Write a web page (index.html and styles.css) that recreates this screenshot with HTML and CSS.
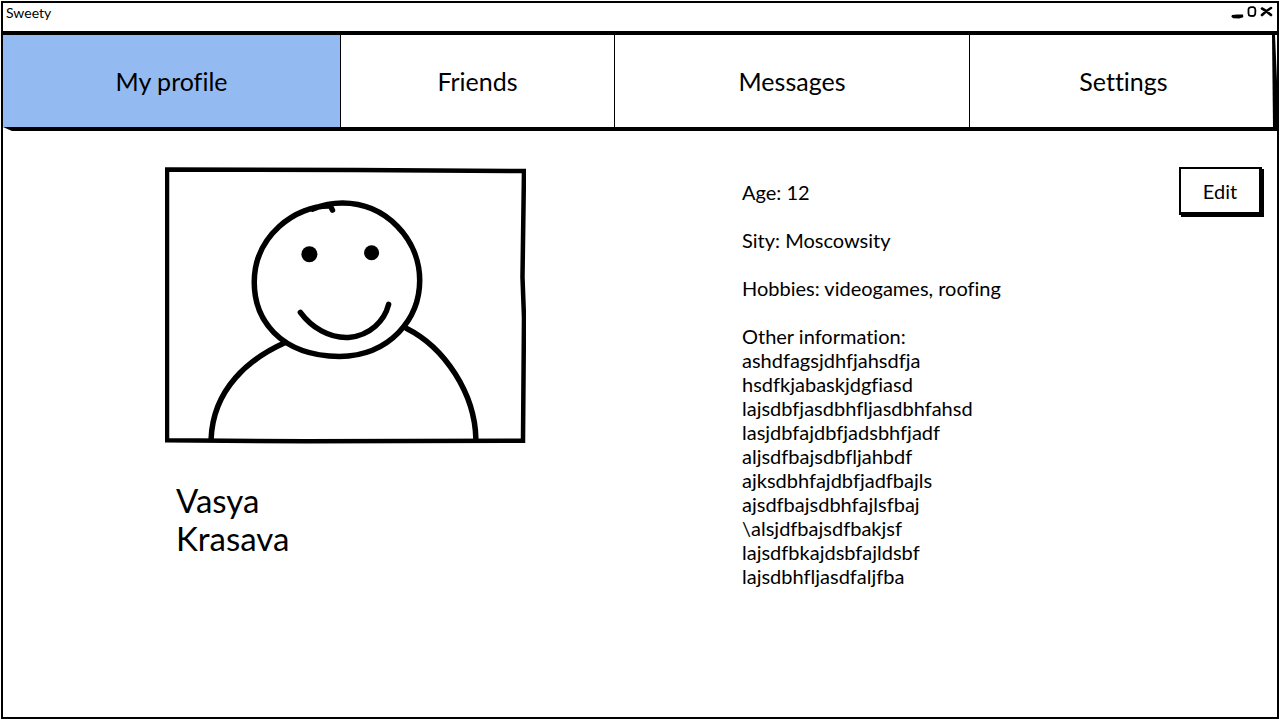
FILE: index.html
```html
<!DOCTYPE html>
<html lang="en">
<head>
<meta charset="utf-8">
<meta name="viewport" content="width=device-width, initial-scale=1">
<title>Sweety</title>
<link rel="stylesheet" href="styles.css">
</head>
<body>
<div class="window">
  <header class="titlebar">
    <span class="title">Sweety</span>
    <div class="controls">
      <button class="control" aria-label="Minimize"><svg width="13" height="14" viewBox="0 0 13 14"><path d="M1 10L6 9.500L12 9.500L12.300 12.300L8 13.500L2 13.200L.3 11.500Z"/></svg></button>
      <button class="control" aria-label="Maximize"><svg width="10" height="14" viewBox="0 0 10 14"><path d="M1.500 4Q1.800 2.500 4 2.200L6.500 2.200Q8.300 2.700 8.400 5L8.200 9Q7.800 10.800 6 11L3.200 10.900Q1.500 10.500 1.500 8.500Z" fill="none" stroke="#000" stroke-width="1.800"/></svg></button>
      <button class="control" aria-label="Close"><svg width="13" height="14" viewBox="0 0 13 14"><path d="M2 3.500Q6 5.500 11 10M11 3Q6 6 2 10" fill="none" stroke="#000" stroke-width="2.600" stroke-linecap="round"/></svg></button>
    </div>
  </header>
  <nav class="tabs">
    <a class="tab tab-active" href="#profile" aria-current="page">My profile</a>
    <a class="tab" href="#friends">Friends</a>
    <a class="tab" href="#messages">Messages</a>
    <a class="tab" href="#settings">Settings</a>
  </nav>
  <main class="profile">
    <section class="person">
      <svg class="photo" viewBox="0 0 360 276" role="img" aria-label="Profile picture">
        <g fill="none" stroke="#000" stroke-linecap="round">
          <path d="M2 2.500L190 3L358 4L356.500 110L358 150L357 273L140 273.500L2 272.500Z" stroke-width="4.500" stroke-linecap="butt"/>
          <path d="M167 43L165 39C130 38 89 69 89 115C89 151 113 188 174 189C225 188 254 151 254 113C254 72 220 36 177 36C168 36 157 38 147 42" stroke-width="5.500"/>
          <path d="M135 145C146 160 164 171 183 170C205 168 219 153 223 137" stroke-width="5.500"/>
          <path d="M120 175C84 191 48 221 46 271M241 161C279 180 309 226 310 271" stroke-width="5.500"/>
        </g>
        <circle cx="144" cy="87" r="8"/><circle cx="206" cy="85.500" r="7.500"/>
      </svg>
      <h1 class="name">Vasya<br>Krasava</h1>
    </section>
    <section class="details">
      <p>Age: 12</p>
      <p>Sity: Moscowsity</p>
      <p>Hobbies: videogames, roofing</p>
      <p>Other information:<br>ashdfagsjdhfjahsdfja<br>hsdfkjabaskjdgfiasd<br>lajsdbfjasdbhfljasdbhfahsd<br>lasjdbfajdbfjadsbhfjadf<br>aljsdfbajsdbfljahbdf<br>ajksdbhfajdbfjadfbajls<br>ajsdfbajsdbhfajlsfbaj<br>\alsjdfbajsdfbakjsf<br>lajsdfbkajdsbfajldsbf<br>lajsdbhfljasdfaljfba</p>
    </section>
    <button class="edit">Edit</button>
  </main>
</div>
</body>
</html>
```
FILE: styles.css
```css
* { box-sizing: border-box; }
body {
  margin: 0;
  padding: 1px;
  background: #fff;
  color: #000;
  font-family: Lato, sans-serif;
  font-variant-ligatures: none;
}
.window {
  display: flex;
  flex-direction: column;
  min-height: calc(100vh - 2px);
  border: 2px solid #000;
}
.titlebar {
  display: flex;
  justify-content: space-between;
  align-items: flex-start;
  height: 28px;
  padding: 2px 4px 0 3px;
}
.title { font-size: 14px; line-height: 16px; }
.controls { display: flex; gap: 3px; }
.control {
  display: flex;
  padding: 0;
  border: 0;
  background: none;
}
.tabs {
  position: relative;
  display: grid;
  grid-template-columns: 338fr 274fr 355fr 307fr;
  border-top: 4px solid #000;
  border-bottom: 4px solid #000;
}
.tabs::before {
  content: "";
  position: absolute;
  left: 0;
  bottom: -4px;
  border-left: 9px solid #fff;
  border-top: 4px solid transparent;
}
.tabs::after {
  content: "";
  position: absolute;
  top: 0;
  right: 0;
  bottom: 0;
  width: 5px;
  background: #000;
  clip-path: polygon(0 0, 3px 0, 5px 50%, 5px 100%, 1px 100%);
}
.tab {
  display: flex;
  justify-content: center;
  align-items: center;
  height: 92px;
  border-right: 1px solid #000;
  color: inherit;
  font-size: 25px;
  line-height: 32px;
  text-decoration: none;
}
.tab:last-child { border-right: 0; }
.tab-active { background: #94baf2; }
.profile {
  display: grid;
  grid-template-columns: 739fr 437fr auto;
  align-items: start;
  padding: 36px 15px 36px 0;
}
.person { padding: 0 216px 0 162px; }
.photo { display: block; width: 100%; }
.name {
  margin: 37px 0 0 11px;
  font-size: 33px;
  font-weight: 400;
  line-height: 38px;
}
.details {
  padding-top: 13px;
  font-size: 20px;
  line-height: 24px;
}
.details p { margin: 0 0 24px; }
.edit {
  width: 83px;
  height: 48px;
  border: 2px solid #000;
  border-right-width: 3px;
  border-bottom-width: 3px;
  box-shadow: 2px 2px 0 #000;
  background: #fff;
  color: #000;
  font: 20px/24px Lato, sans-serif;
}
```
